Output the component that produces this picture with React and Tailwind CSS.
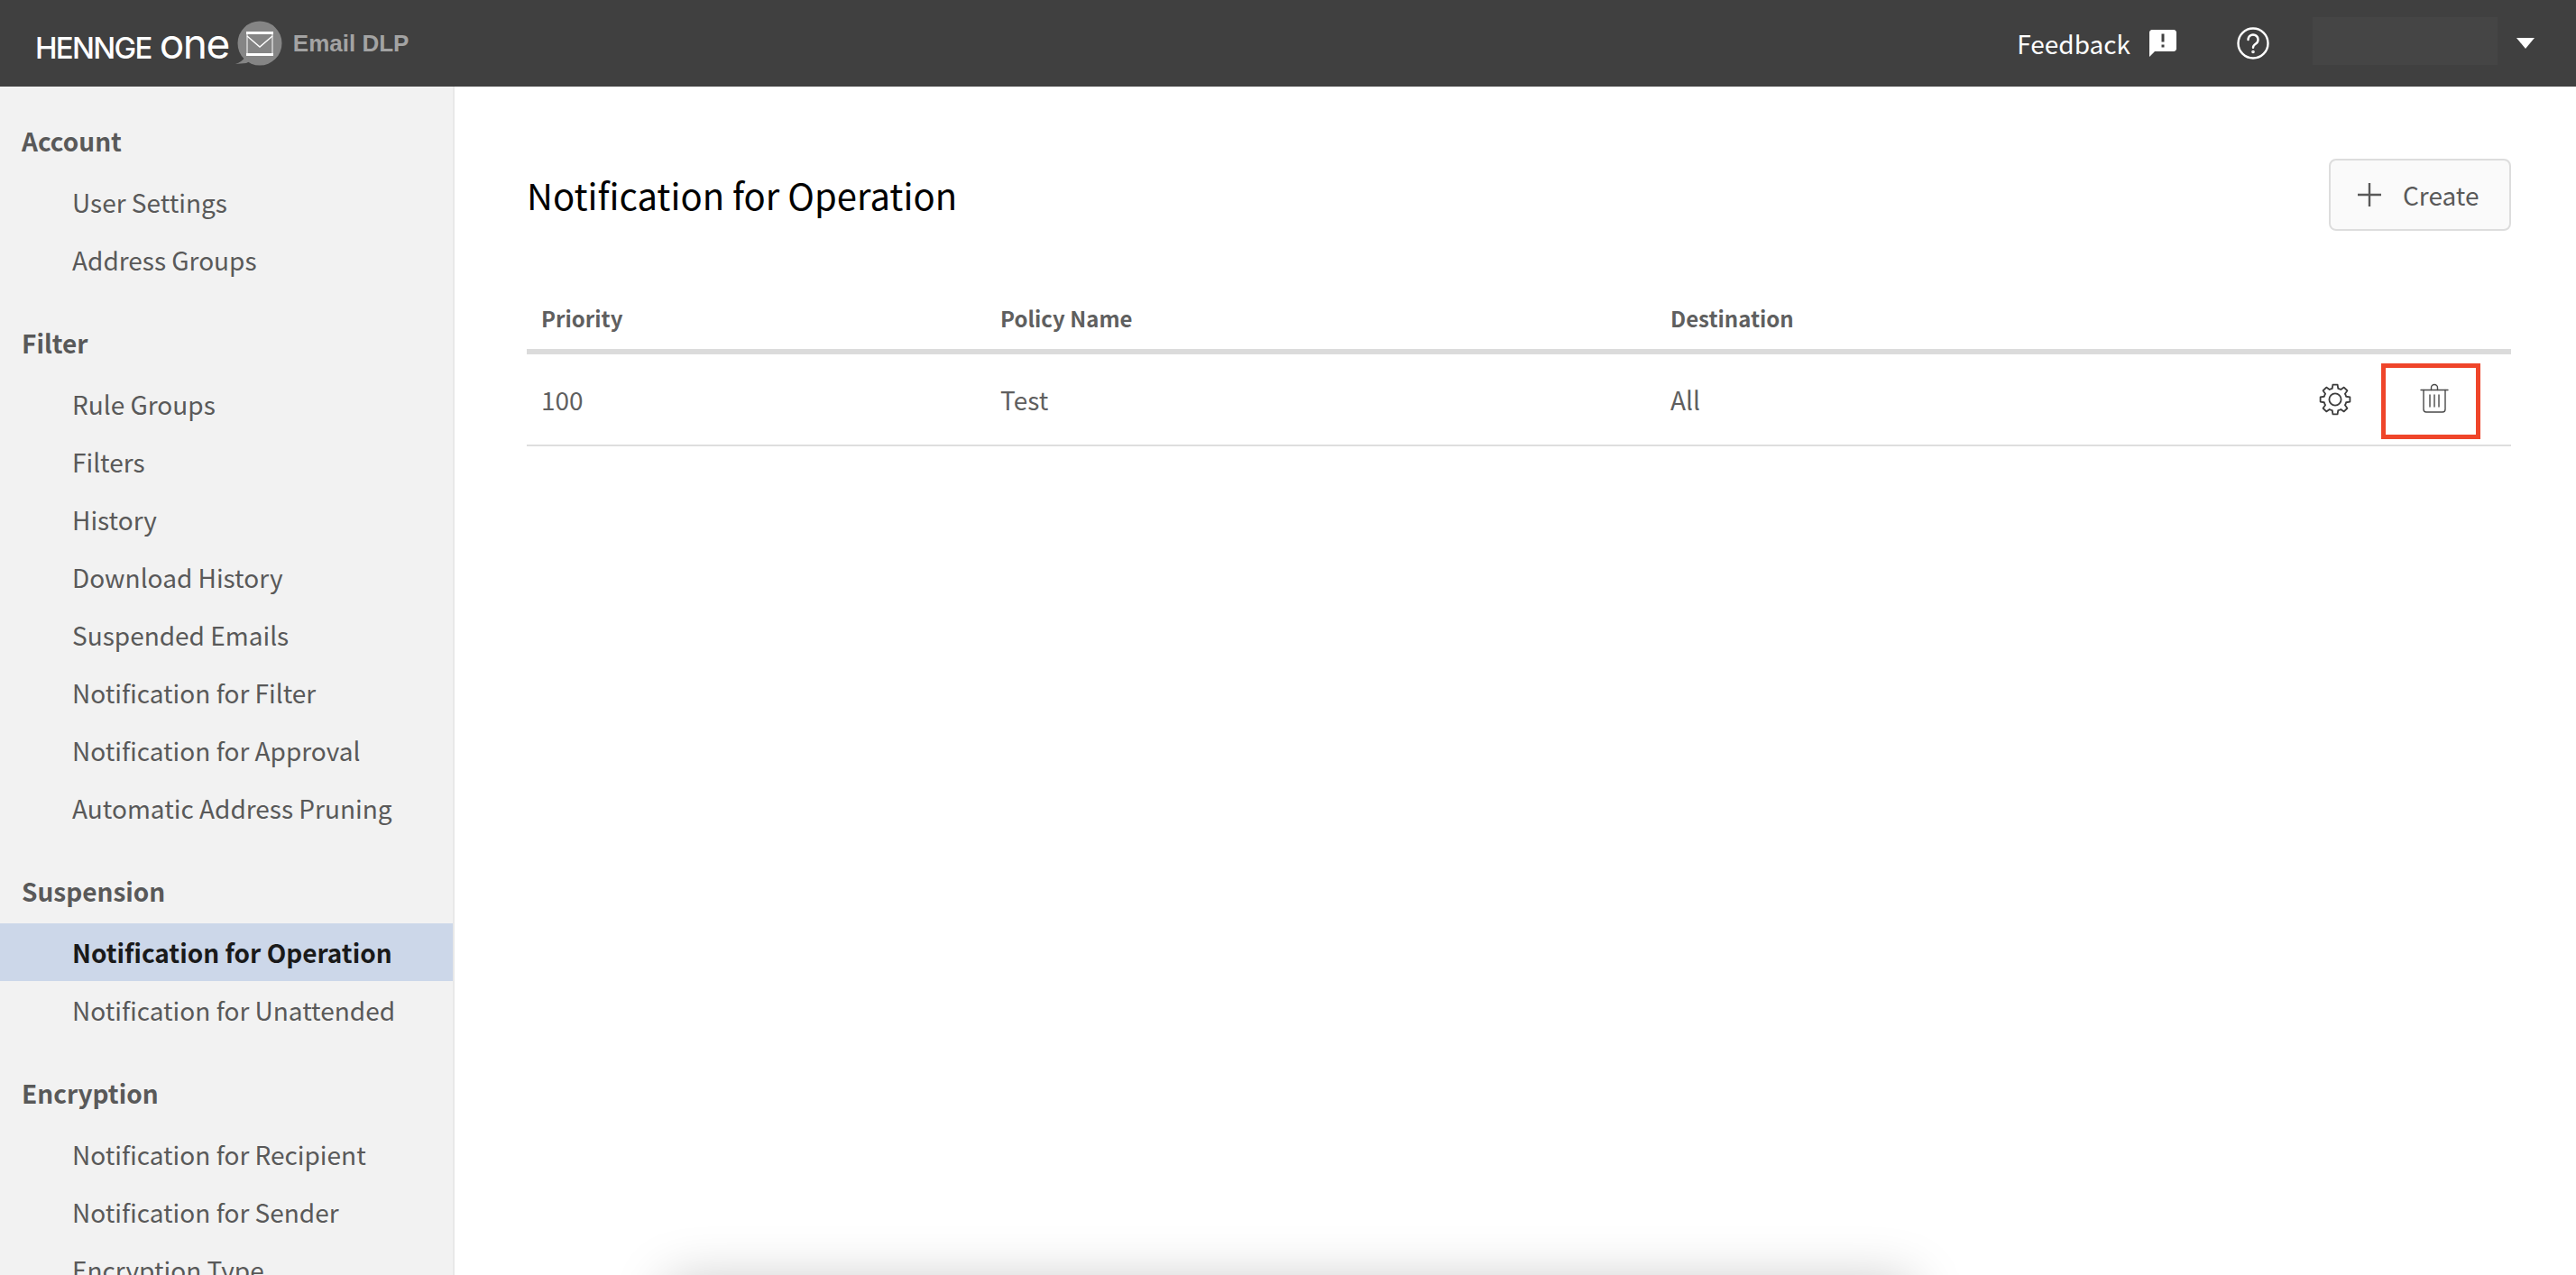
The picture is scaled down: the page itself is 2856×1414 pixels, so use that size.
import React from 'react';

const groups = [
  ['Account', ['User Settings', 'Address Groups']],
  ['Filter', ['Rule Groups', 'Filters', 'History', 'Download History', 'Suspended Emails', 'Notification for Filter', 'Notification for Approval', 'Automatic Address Pruning']],
  ['Suspension', ['Notification for Operation', 'Notification for Unattended']],
  ['Encryption', ['Notification for Recipient', 'Notification for Sender', 'Encryption Type']],
];

function Logo() {
  return (
    <div className="flex items-center">
      <span className="ml-[39px] flex items-baseline text-white font-['Inter',sans-serif] leading-none">
        <span className="text-[33px] font-medium tracking-[-1.7px]">HENNGE</span>
        <span className="ml-[9px] text-[46px] font-normal tracking-[-1.5px] leading-none">one</span>
      </span>
      <svg className="ml-[5px] w-[54px] h-[54px]" viewBox="0 0 54 54">
        <circle cx="29" cy="27" r="24.5" fill="#858585" />
        <path d="M13 42 L20 46 L14 49 L2 50 Q9 48 13 42Z" fill="#858585" />
        <rect x="14" y="14" width="30" height="3" fill="#fff" />
        <rect x="14" y="38" width="30" height="3" fill="#fff" />
        <path d="M15 17V38M43 17V38" stroke="#fff" strokeWidth="1" fill="none" />
        <path d="M15 19L29 31L43 19" stroke="#fff" strokeWidth="1.4" fill="none" />
      </svg>
      <span className="ml-[12px] text-[26px] font-bold text-[#a3a3a3] font-['Liberation_Sans',sans-serif]">Email DLP</span>
    </div>
  );
}

function gearPath() {
  const pt = (r, deg) => {
    const t = (deg * Math.PI) / 180;
    return `${(18 + r * Math.sin(t)).toFixed(2)} ${(18 - r * Math.cos(t)).toFixed(2)}`;
  };
  let d = '';
  for (let i = 0; i < 8; i++) {
    const a = i * 45;
    d += `${i === 0 ? 'M' : 'L'}${pt(12.6, a - 15)} L${pt(16.6, a - 9)} L${pt(16.6, a + 9)} L${pt(12.6, a + 15)} `;
    d += `A12.6 12.6 0 0 1 ${pt(12.6, a + 30)} `;
  }
  return d + 'Z';
}

function Gear() {
  return (
    <svg className="w-[36px] h-[36px]" viewBox="0 0 36 36" fill="none" stroke="#3c3c3c" strokeWidth="1.8" strokeLinejoin="round">
      <path d={gearPath()} />
      <circle cx="18" cy="18" r="6.6" />
    </svg>
  );
}

function Trash() {
  return (
    <svg className="w-[32px] h-[33px]" viewBox="0 0 32 33" fill="none" stroke="#4a4a4a" strokeWidth="1.4" strokeLinecap="round" strokeLinejoin="round">
      <path d="M1 7.5H31" />
      <path d="M12.5 7.5V5a3.5 3.5 0 0 1 7 0v2.5" />
      <path d="M4 7.5V29a3 3 0 0 0 3 3H25a3 3 0 0 0 3-3V7.5" />
      <path d="M11 13V26M16 13V26M21 13V26" />
    </svg>
  );
}

export default function App() {
  return (
    <div className="relative h-[1414px] w-[2856px] overflow-hidden flex flex-col bg-white font-['Noto_Sans_CJK_JP',sans-serif] text-[#595959]">
      <header className="h-[96px] shrink-0 bg-[#404040] flex items-center justify-between">
        <Logo />
        <div className="flex items-center">
          <span className="text-[28px] text-white leading-none">Feedback</span>
          <svg className="ml-[18px] w-[36px] h-[36px]" viewBox="0 0 24 24" fill="#fff">
            <path d="M20 2H4c-1.1 0-1.99.9-1.99 2L2 22l4-4h14c1.1 0 2-.9 2-2V4c0-1.1-.9-2-2-2zm-7 9h-2V5h2v6zm0 4h-2v-2h2v2z" />
          </svg>
          <svg className="ml-[63px] w-[38px] h-[38px]" viewBox="0 0 38 38" fill="none" stroke="#fff" strokeWidth="2.4" strokeLinecap="round">
            <circle cx="19" cy="19" r="16.5" />
            <path d="M13.5 15a5.5 5.5 0 1 1 8.5 4.6c-1.8 1.2-3 2.2-3 4.2" />
            <circle cx="19" cy="28.5" r="0.6" fill="#fff" />
          </svg>
          <div className="ml-[47px] mb-[6px] w-[205px] h-[53px] bg-[#454545]" />
          <div className="ml-[21px] mr-[46px] w-0 h-0 border-x-[10px] border-x-transparent border-t-[12px] border-t-white" />
        </div>
      </header>

      <div className="flex flex-1 min-h-0">
        <aside className="w-[504px] shrink-0 bg-[#f2f2f2] border-r-2 border-[#e8e8e8] pt-[24px] overflow-hidden">
          {groups.map(([title, items]) => (
            <div key={title} className="mb-[24px]">
              <div className="h-[72px] pl-[24px] flex items-center text-[28px] font-bold leading-none">{title}</div>
              {items.map((it) => {
                const active = it === 'Notification for Operation';
                return (
                  <div key={it} className={active
                    ? 'h-[64px] pl-[80px] flex items-center text-[28px] leading-none font-bold text-[#1a1a1a] bg-[#ccd7e9]'
                    : 'h-[64px] pl-[80px] flex items-center text-[28px] leading-none'}>{it}</div>
                );
              })}
            </div>
          ))}
        </aside>

        <main className="flex-1 pl-[80px] pr-[72px]">
          <div className="h-[80px] mt-[80px] flex items-center justify-between">
            <h1 className="text-[40px] font-normal text-black leading-none">Notification for Operation</h1>
            <button className="w-[202px] h-[80px] rounded-[8px] border-2 border-[#dddddd] bg-[#fafafa] flex items-center pl-[30px]">
              <svg className="w-[26px] h-[26px]" viewBox="0 0 26 26" stroke="#595959" strokeWidth="2.4"><path d="M13 0V26M0 13H26" /></svg>
              <span className="ml-[24px] text-[28px] leading-none">Create</span>
            </button>
          </div>
          <div className="mt-[77px] h-[40px] flex items-center text-[24px] font-bold leading-none text-[#5f5f5f]">
            <div className="w-[509px] pl-[16px]">Priority</div>
            <div className="w-[743px] pl-[16px]">Policy Name</div>
            <div className="pl-[16px]">Destination</div>
          </div>
          <div className="mt-[14px] h-[6px] bg-[#dbdbdb]" />
          <div className="h-[102px] border-b-2 border-[#dedede] flex items-center text-[28px] leading-none text-[#5f5f5f]">
            <div className="w-[509px] pl-[16px]">100</div>
            <div className="w-[743px] pl-[16px]">Test</div>
            <div className="flex-1 pl-[16px]">All</div>
            <div className="w-[36px] h-[36px] flex items-center justify-center"><Gear /></div>
            <div className="ml-[33px] mr-[34px] mt-[4px] w-[110px] h-[84px] border-[5px] border-[#ef452a] flex items-center justify-center pl-[7px] pb-[8px]"><Trash /></div>
          </div>
        </main>
      </div>

      <div className="absolute left-[760px] top-[1440px] w-[1340px] h-[80px] shadow-[0_0_60px_20px_rgba(0,0,0,0.22)]" />
    </div>
  );
}
